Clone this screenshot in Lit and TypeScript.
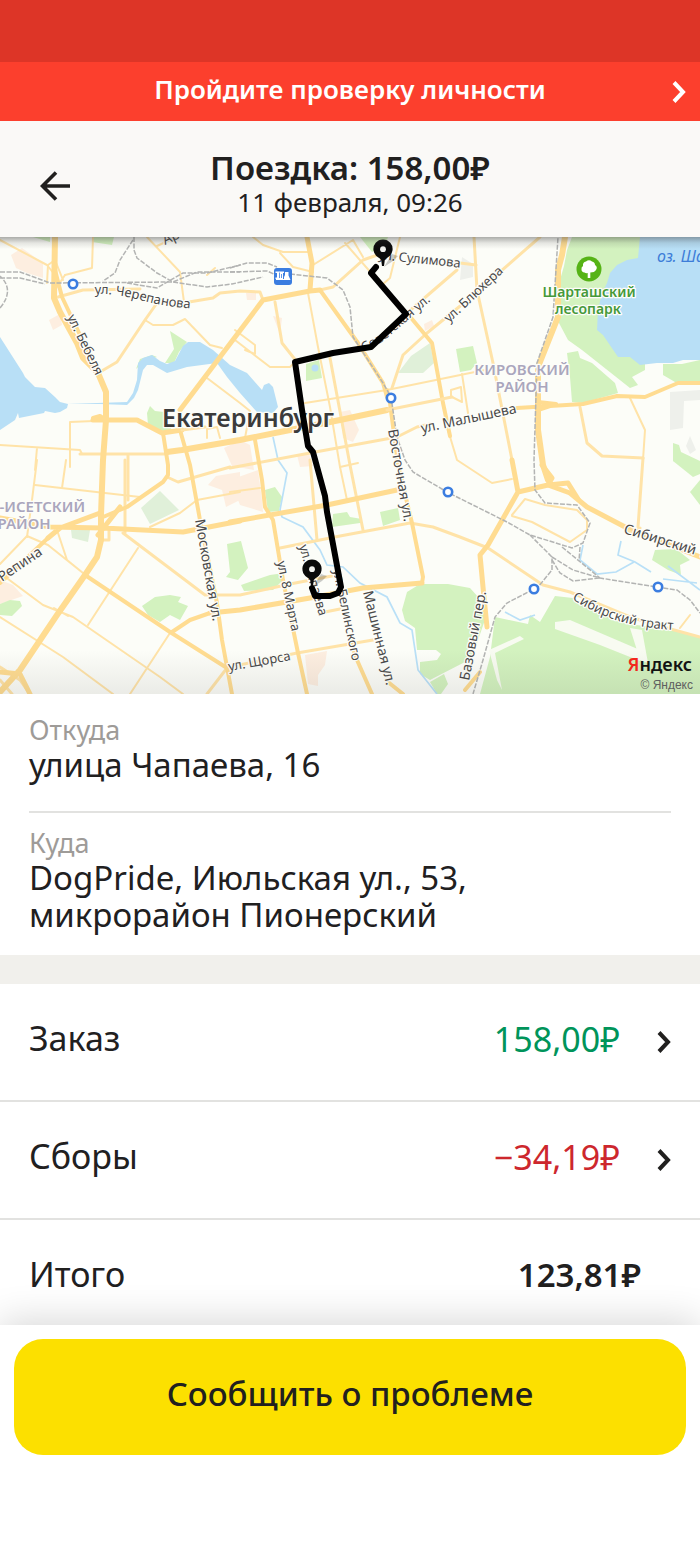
import { LitElement, html, svg, css } from "lit";
import { customElement, property } from "lit/decorators.js";

type Road = [width: number, d: string];
type Label = [x: number, y: number, angle: number, text: string];

const WATER = [
  "M0 337L23 373L25 377L35 387L45 388L55 397L60 402L68 404L67 408L60 412L55 413L45 411L44 413L19 418L18 413L15 420L0 430Z",
  "M67 404L127 402L133 393L137 380L138 363L143 358L152 355L160 361L167 364L175 361L183 346L188 342L200 342L213 350L230 365L247 373L262 390L264 385L269 383L273 387L278 407L273 413L257 412L240 393L227 377L217 363L187 367L167 373L153 365L147 365L143 370L138 390L134 398L127 405L100 404Z",
  "M640 237L638 258L627 260L617 265L610 273L607 283L602 293L598 310L597 330L603 335L618 357L630 357L640 365L657 363L673 363L683 360L700 360V237Z",
];

const PARKS = [
  "M572 237H645V370L632 377L638 385L630 388L582 350L568 340L559 323L560 280L564 266L567 250Z",
  "M567 353L578 351L580 358L592 363L615 383L618 393L583 403L572 402L570 377Z",
  "M663 364H682L700 360V381L675 382L663 375Z",
  "M456 349L473 346L477 363L471 370L460 372Z",
  "M170 331L187 342L179 352L174 363L165 363L174 349Z",
  "M136 369L140 359L152 355L157 357L145 361Z",
  "M147 413L150 406L155 411L164 412L166 420L172 430L162 434L148 425Z",
  "M33 237H50V242Z",
  "M92 237H114L112 245L92 242Z",
  "M360 237H388L385 246L372 252Z",
  "M306 364L319 360L322 378L306 381Z",
  "M142 606L155 597L170 595L181 597L178 602L188 606L180 620L170 615L160 622L148 615Z",
  "M0 604L10 600L20 601L22 606L12 616L0 615Z",
  "M227 544L241 541L248 568L238 580L226 577L230 572Z",
  "M241 585L264 577L270 575L284 573L283 580L273 590L244 591Z",
  "M265 490L275 487L282 497L279 511L268 512Z",
  "M333 514L347 512L350 517L362 519L360 523L332 527Z",
  "M380 512L398 508L400 520L383 526Z",
  "M402 610L407 592L420 584H448L470 588L479 598L486 617L478 640L472 658L463 663L430 680L420 674V662L437 660L441 654L436 650H417L415 628L405 621Z",
  "M555 596L573 598L600 613L627 624L673 629L700 638V694H480L490 657L495 617L528 624L530 615L540 622Z",
  "M430 682L444 674L448 684L441 694H437Z",
  "M652 560L655 550L676 549L690 560L680 565L681 575L668 570Z",
  "M673 461H700V474L693 477Z",
  "M690 492L700 480V505Z",
  "M673 443L679 445L681 452L700 461V470L673 461Z",
];

const SOFT_PARKS = [
  "M398 373L411 356L430 343L434 363L423 373Z",
  "M141 508L160 491L179 510L150 524Z",
  "M71 530L90 530L88 542L72 538Z",
];

const BUILT = [
  "M11 255L22 248L43 263L43 278L27 273L16 268Z",
  "M49 320L60 314L62 325L53 330Z",
  "M208 485L216 476L240 472V500L226 507L222 490Z",
  "M340 412L350 410L359 430L353 442L343 438Z",
  "M230 480L258 470L262 500L263 512L240 505Z",
  "M305 655L327 651L325 665L318 675V686L308 684Z",
  "M0 580L13 585L23 596L0 604Z",
  "M224 448L240 440L250 445L254 470L232 466Z",
  "M297 455L309 454L313 466L300 467Z",
  "M424 324L432 320L434 326L425 331Z",
  "M246 293H256V300H247Z",
  "M273 316L282 318L280 334Z",
];

const GREY_BLOCKS = [
  "M670 392L700 390V400L684 401L683 428L670 430Z",
  "M690 436L696 450L690 454L686 446Z",
  "M462 257L473 264V277L460 280Z",
];

const STREAMS = [
  "M273 437L278 460L287 473L280 510L282 517L303 527L320 550L327 565L343 567L360 583L387 597L400 623L412 630L418 670L437 694",
  "M621 541L618 555L635 562L651 572",
  "M583 545L580 560L597 574L616 572L634 562",
  "M668 566L700 590M663 579L697 583",
  "M505 612L520 620L535 615",
];

const ROADS: Road[] = [
  [2, "M0 240L47 265L55 275M93 237L92 268L65 275M147 237L180 272L184 302M157 246L170 240"],
  [2, "M145 320L153 325L173 325L185 319L210 345L222 348M207 378L240 403L250 411L245 438M70 467L70 422L94 421"],
  [2, "M0 445L80 450L82 454M37 448L35 470M35 485L105 493L140 497M62 488L66 460M27 537L32 500L37 460"],
  [2, "M0 564L27 536L48 545L83 573M57 530L67 560L83 573M138 548L88 625M150 527L180 513L197 500L240 492"],
  [2, "M0 573L43 605L73 617L160 677L183 694M0 617L63 657L113 694M170 633L130 694M54 608L68 616"],
  [2, "M235 330L255 345V354L245 350M235 340L270 367L290 367L297 360M207 438V429L217 427L220 438"],
  [2, "M308 293L318 347L330 407L340 467L347 500M253 237L263 245L283 252H308M280 253L293 267L313 272"],
  [2, "M313 265L353 240L363 257M400 237L390 278L383 284M345 243L373 275M305 403L387 390L470 373L495 368"],
  [2, "M443 403L448 430L457 460L492 483L512 479M452 397L462 402L461 387L451 390V397M462 374L468 413"],
  [2, "M630 398L645 430L643 460M512 515L525 499L545 505L577 510L587 520V530L570 542L532 522L512 516M680 628L690 615"],
  [2, "M207 275L215 268M65 275L55 290M47 283L48 265L55 260L63 280M340 467L358 463M230 492L260 488"],
  [3, "M58 297L83 290L140 289M183 303L213 298L220 293L240 291L260 292L263 300M100 372L117 362L145 320L157 303"],
  [3, "M275 302L282 343L297 362M330 358L350 465L363 530M310 460L317 540M320 290L333 287L363 260L383 253"],
  [3, "M407 313L457 270M392 388L403 355L427 333L470 298L540 237M460 263L476 265M580 407L587 443L602 456L643 458"],
  [3, "M280 548L340 536L410 523L433 527L460 537L488 548L543 585L570 592L630 617L667 628L700 637"],
  [3, "M123 533L205 595L240 595L290 584L337 575M125 460V533M109 530V540H101M230 667L297 653L373 640M320 613L340 609"],
  [3, "M128 500L128 455M80 454H167M230 468L310 453L397 437L417 427L430 424M230 467L178 482L167 477"],
  [3, "M643 458L638 527M474 237L477 290L493 363L513 465M227 668L207 694M0 667L20 680L30 694M0 680L12 694"],
  [4, "M255 440L262 480L265 507L273 520L283 580L298 653L307 694M180 430L190 465L200 520L217 603L222 640L232 694"],
  [4, "M163 433L168 465V475L163 482L127 507L103 517M407 313L432 343L443 403L450 436M210 613L190 620L172 632"],
  [4, "M85 575L170 632L227 668M350 640L357 660L372 694M48 538L0 583M388 682L403 694M93 418L100 416L106 420"],
  [4, "M387 390L390 403L398 465L412 523L423 577L422 583M480 672L465 690M55 270L62 297L80 335L98 373"],
  [4, "M320 290L358 343L383 383L387 397M517 408L583 404L617 396L645 397L678 383H700M538 402L556 404L538 410"],
  [5, "M93 420L137 420L162 433L182 430M422 583L363 588L310 598L240 610L210 613M230 522L327 505L397 490"],
  [5, "M0 518L50 527L103 528L183 532L240 521M100 513L60 528L48 538M120 507L98 535M307 237L312 263L310 290"],
  [5, "M512 460L518 492L488 545L480 555L483 587L487 627M518 492L548 485M548 485L568 483L578 499"],
  [5, "M180 410L217 361L263 300L310 291L320 290M542 465L552 478L548 485L570 493L587 507L627 528L700 557M0 672L20 674L30 694"],
  [6, "M167 452L182 450L240 440L290 430L340 420L387 410M565 237L562 255L558 270V317L538 367V430L543 465L548 480"],
  [6, "M55 237L54 298L60 312L77 343L83 358L98 373L106 392V420L103 460L101 515V540L97 557L85 575L57 615L20 670L0 692"],
  [3, "M387 410L452 397M182 430L205 427M627 530L634 534L640 528"],
];

const RAILS = [
  "M0 272H20L50 283L173 282L197 272L240 272",
  "M0 278L20 278L45 284M0 308Q15 290 0 276",
  "M134 237V250L137 258L157 273L173 282L207 287L232 284L263 277",
  "M133 240L120 260L115 273L103 281M127 283L157 288L183 273L207 273L240 265",
  "M230 268L247 263H267L277 267M230 272L267 271L276 275",
  "M290 274L327 278L343 290L350 307L353 337L383 383L391 397L397 437L405 460L413 472L447 492L507 522L530 535L572 548L583 543L590 523L577 505L545 503L535 490L534 460L537 363L553 317L558 237",
  "M530 535L552 557V570L538 587L507 603L495 617L483 660L473 694",
  "M552 557L573 570L600 578L657 587L677 590L690 600L700 613",
  "M562 547L600 578M552 560L560 573L573 581L600 578M580 547L579 561",
];

const STATIONS = [[73, 284], [391, 398], [448, 492], [534, 589], [658, 587]];

const STREET_LABELS: Label[] = [
  [378, 259, 6, "ул. Сулимова"],
  [449, 323, -43, "ул. Блюхера"],
  [67, 317, 64, "ул. Бебеля"],
  [277, 562, 78, "ул. 8 Марта"],
  [299, 546, 74, "ул. Чапаева"],
  [333, 570, 78, "ул. Белинского"],
  [229, 671, -10, "ул. Щорса"],
];

const AVENUE_LABELS: Label[] = [
  [422, 433, -12, "ул. Малышева"],
  [195, 520, 80, "Московская ул."],
  [363, 592, 76, "Машинная ул."],
  [388, 430, 80, "Восточная ул."],
  [469, 681, -79, "Базовый пер."],
  [2, 582, -34, "Репина"],
  [623, 533, 17, "Сибирский тракт"],
  [165, 245, -25, "Артинская"],
];

const ROUTE =
  "M376 267L371 273L406 314L371 347L333 353L295 362L302 410L308 446L313 452L322 485L325 496L327 512L341 587L338 593L330 596L315 596L312 588";

@customElement("trip-map")
class TripMap extends LitElement {
  static styles = css`
    :host { display: block; position: relative; }
    .map { display: block; width: 100%; height: auto; font-family: "Noto Sans", "Open Sans", sans-serif; }
    .shade-top, .shade-bottom { position: absolute; left: 0; right: 0; pointer-events: none; }
    .shade-top { top: 0; height: 12px; background: linear-gradient(rgba(60, 60, 60, 0.42), rgba(60, 60, 60, 0.12) 50%, rgba(60, 60, 60, 0)); }
    .shade-bottom { bottom: 0; height: 44px; background: linear-gradient(rgba(60, 60, 60, 0), rgba(60, 60, 60, 0.09)); }
    .road { fill: none; stroke: #ffdc91; stroke-linejoin: round; stroke-linecap: round; }
    .minor { stroke: #ffe3a8; }
    .rail { fill: none; stroke: #b3b4b3; stroke-width: 1.5; stroke-dasharray: 5 1.5; }
    .stream { fill: none; stroke: #b9e0f7; stroke-width: 1.7; }
    .route { fill: none; stroke: #000; stroke-width: 6; stroke-linejoin: round; stroke-linecap: round; }
    .label { fill: #4a4a4a; stroke: #fdfdf9; stroke-width: 2.5; paint-order: stroke; stroke-linejoin: round; font-size: 13px; }
    .avenue { font-size: 14px; }
    .city { fill: #3b3b3b; font-size: 25px; font-weight: 600; }
    .district { fill: #aaa6bd; font-size: 15px; font-weight: 600; text-anchor: middle; }
    .park { fill: #45993a; font-size: 14px; font-weight: 600; text-anchor: middle; }
    .lake { fill: #3d7dd8; stroke: #b8dff6; font-size: 16px; font-style: italic; }
    .brand { fill: #111; font-size: 18px; font-weight: 600; text-anchor: end; }
    .brand-first { fill: #f8281c; }
    .copyright { fill: #626262; font-family: "Liberation Sans", sans-serif; font-size: 12px; text-anchor: end; }
  `;

  private pin(x: number, y: number) {
    return svg`<g transform=${`translate(${x} ${y})`}>
      <path d="M1 18L9 5L15 7L10 12Z" fill="#000" opacity=".2"></path>
      <path d="M-1 17L-1.800 11Q-3 9.500-5 8.300A9.600 9.600 0 1 1 5 8.300Q3 9.500 1.800 11L1 17Z" fill="#0a0a0a"></path>
      <circle cy=".2" r="2.900" fill="#f2f2ee"></circle>
    </g>`;
  }

  render() {
    return html`
      <svg class="map" viewBox="0 237 700 457" role="img" aria-label="Маршрут поездки">
        <rect y="237" width="700" height="457" fill="#fcfdf8"></rect>
        ${BUILT.map((d) => svg`<path d=${d} fill="#fdeee0"></path>`)}
        ${GREY_BLOCKS.map((d) => svg`<path d=${d} fill="#eef0eb"></path>`)}
        ${PARKS.map((d) => svg`<path d=${d} fill="#d3f2bf"></path>`)}
        ${SOFT_PARKS.map((d) => svg`<path d=${d} fill="#e0f0d9"></path>`)}
        <path d="M555 622L570 620L640 650L640 661L600 645L555 629ZM630 628L642 630L648 663L640 660ZM489 650L520 636L524 639L495 653L502 690L497 680Z" fill="#f8fbf1"></path>
        ${WATER.map((d) => svg`<path d=${d} fill="#b8dff6"></path>`)}
        <circle cx="315" cy="368" r="3.5" fill="#b8dff6"></circle>
        ${STREAMS.map((d) => svg`<path class="stream" d=${d}></path>`)}
        ${ROADS.map(([w, d]) => svg`<path class=${w < 4 ? "road minor" : "road"} stroke-width=${w} d=${d}></path>`)}
        ${RAILS.map((d) => svg`<path class="rail" d=${d}></path>`)}
        <text class="label city" x="162" y="427">Екатеринбург</text>
        <path id="cherepanova" d="M95 294Q115 293 140 300T197 309" fill="none"></path>
        <text class="label"><textPath href="#cherepanova">ул. Черепанова</textPath></text>
        <path id="tract" d="M572 599Q600 617 630 624T690 630" fill="none"></path>
        <text class="label"><textPath href="#tract">Сибирский тракт</textPath></text>
        <path id="sovetskaya" d="M364 352L382 342L440 293" fill="none"></path>
        <text class="label"><textPath href="#sovetskaya">Советская ул.</textPath></text>
        ${STREET_LABELS.map(
          ([x, y, a, t]) => svg`<text class="label" transform=${`translate(${x} ${y}) rotate(${a})`}>${t}</text>`,
        )}
        ${AVENUE_LABELS.map(
          ([x, y, a, t]) => svg`<text class="label avenue" transform=${`translate(${x} ${y}) rotate(${a})`}>${t}</text>`,
        )}
        <text class="label district" x="522" y="375">КИРОВСКИЙ</text>
        <text class="label district" x="522" y="392">РАЙОН</text>
        <text class="label district" x="24" y="512">ВЕРХ-ИСЕТСКИЙ</text>
        <text class="label district" x="24" y="529">РАЙОН</text>
        <circle cx="589" cy="269" r="12.5" fill="#56b316"></circle>
        <path d="M587.700 278V273Q586 273.500 584.500 272.500Q581.500 272 581.500 269.500Q581 267 583 266Q582.500 262 586 261.500Q589 259 592 261.500Q595 262 595 265Q598 267 596 270Q594.500 272.500 590.300 272.500V278Z" fill="#fff"></path>
        <text class="label park" x="589" y="297">Шарташский</text>
        <text class="label park" x="588" y="314">лесопарк</text>
        <text class="label lake" x="657" y="262">оз. Шарташ</text>
        ${STATIONS.map(
          ([x, y]) => svg`<circle cx=${x} cy=${y} r="4.200" fill="#fff" stroke="#3b7de0" stroke-width="2.600"></circle>`,
        )}
        <rect x="274" y="268" width="18" height="17" rx="3" fill="#3b7de0"></rect>
        <path d="M275.500 271.500H284V273H283V279H275.500V277.500H277V273H275.500ZM284 277L285 275V272H288.500V275.500L290.500 280H276V279H284Z" fill="#fff"></path>
        <path d="M279.500 272.500V278M281.500 274V278" stroke="#3b7de0" stroke-width=".8"></path>
        <path class="route" d=${ROUTE}></path>
        ${this.pin(383, 249)} ${this.pin(312, 569)}
        <text class="brand" x="692" y="671"><tspan class="brand-first">Я</tspan>ндекс</text>
        <text class="copyright" x="693" y="689">© Яндекс</text>
      </svg>
      <div class="shade-top"></div>
      <div class="shade-bottom"></div>
    `;
  }
}

@customElement("chevron-icon")
class ChevronIcon extends LitElement {
  static styles = css`
    :host { display: block; }
    .icon { display: block; width: 14px; height: 22px; fill: none; stroke: currentColor; stroke-width: 4; }
  `;
  render() {
    return html`<svg class="icon" viewBox="0 0 14 22" aria-hidden="true"><path d="M2 1.500L11 11L2 20.500"></path></svg>`;
  }
}

@customElement("amount-row")
class AmountRow extends LitElement {
  @property() label = "";
  @property() amount = "";
  @property() tone = "income";

  static styles = css`
    :host { display: block; border-bottom: 2px solid #e2e2e0; }
    .row { display: flex; align-items: center; width: 100%; height: 116px; padding: 0 29px; border: 0; background: none; color: inherit; font: inherit; text-align: left; cursor: pointer; }
    .label { flex: 1; padding-bottom: 8px; }
    .amount { padding-bottom: 6px; margin-right: 37px; }
    .income { color: #00945a; }
    .fee { color: #cd272d; }
  `;
  render() {
    return html`<button class="row" type="button">
      <span class="label">${this.label}</span>
      <span class="amount ${this.tone}">${this.amount}</span>
      <chevron-icon></chevron-icon>
    </button>`;
  }
}

@customElement("app-root")
class AppRoot extends LitElement {
  static styles = css`
    :host { display: flex; flex-direction: column; min-height: 100vh; background: #fff; color: #21201f; font-family: "Noto Sans", "Open Sans", sans-serif; font-size: 34px; line-height: 37px; }
    .status { height: 62px; background: #dd3527; }
    .banner { display: grid; grid-template-columns: 1fr auto 1fr; align-items: center; height: 59px; padding: 0 14px; border: 0; background: #fc3f2d; color: #fff; font: inherit; font-size: 26px; font-weight: 600; line-height: 32px; cursor: pointer; }
    .banner-text { grid-column: 2; padding-bottom: 6px; }
    .banner chevron-icon { justify-self: end; }
    .header { display: grid; grid-template-columns: 1fr auto 1fr; align-items: center; height: 116px; padding: 0 40px; box-sizing: border-box; background: #faf9f7; text-align: center; }
    .back { justify-self: start; display: block; padding: 0; margin-top: 14px; border: 0; background: none; color: inherit; cursor: pointer; }
    .back-icon { display: block; width: 30px; height: 30px; fill: none; stroke: currentColor; stroke-width: 3.6; }
    .title { margin: 8px 0 0; font-size: 33px; font-weight: 600; line-height: 37px; }
    .date { margin: 0; font-size: 26px; line-height: 32px; }
    .places { margin: 0; padding: 0 29px; font-size: 33px; }
    .place { padding: 20px 0 28px; }
    .place + .place { padding: 14px 0 22px; border-top: 2px solid #e2e2e0; }
    .place-label { color: #9e9b98; font-size: 27px; line-height: 32px; }
    .place-name { margin: 0; max-width: 520px; }
    .band { height: 29px; background: #f1f0ec; }
    .total { display: flex; justify-content: space-between; box-sizing: border-box; height: 105px; padding: 36px 59px 0 29px; }
    .total-amount { font-size: 33px; font-weight: 600; }
    .footer { position: relative; flex: 1; padding: 14px; background: #fff; box-shadow: 0 -4px 36px rgba(0, 0, 0, 0.16); }
    .report { display: block; width: 100%; height: 116px; padding: 0 0 8px; border: 0; border-radius: 29px; background: #fce000; color: inherit; font: inherit; font-size: 33px; font-weight: 500; cursor: pointer; }
  `;

  render() {
    return html`
      <div class="status"></div>
      <button class="banner" type="button">
        <span class="banner-text">Пройдите проверку личности</span>
        <chevron-icon></chevron-icon>
      </button>
      <header class="header">
        <button class="back" type="button" aria-label="Назад">
          <svg class="back-icon" viewBox="0 0 30 30" aria-hidden="true"><path d="M30 15H3M16 1.500L2.500 15L16 28.500"></path></svg>
        </button>
        <div>
          <h1 class="title">Поездка: 158,00₽</h1>
          <p class="date">11 февраля, 09:26</p>
        </div>
      </header>
      <trip-map></trip-map>
      <dl class="places">
        <div class="place">
          <dt class="place-label">Откуда</dt>
          <dd class="place-name">улица Чапаева, 16</dd>
        </div>
        <div class="place">
          <dt class="place-label">Куда</dt>
          <dd class="place-name">DogPride, Июльская ул., 53, микрорайон Пионерский</dd>
        </div>
      </dl>
      <div class="band"></div>
      <amount-row label="Заказ" amount="158,00₽" tone="income"></amount-row>
      <amount-row label="Сборы" amount="−34,19₽" tone="fee"></amount-row>
      <div class="total">
        <span>Итого</span>
        <span class="total-amount">123,81₽</span>
      </div>
      <footer class="footer">
        <button class="report" type="button">Сообщить о проблеме</button>
      </footer>
    `;
  }
}
